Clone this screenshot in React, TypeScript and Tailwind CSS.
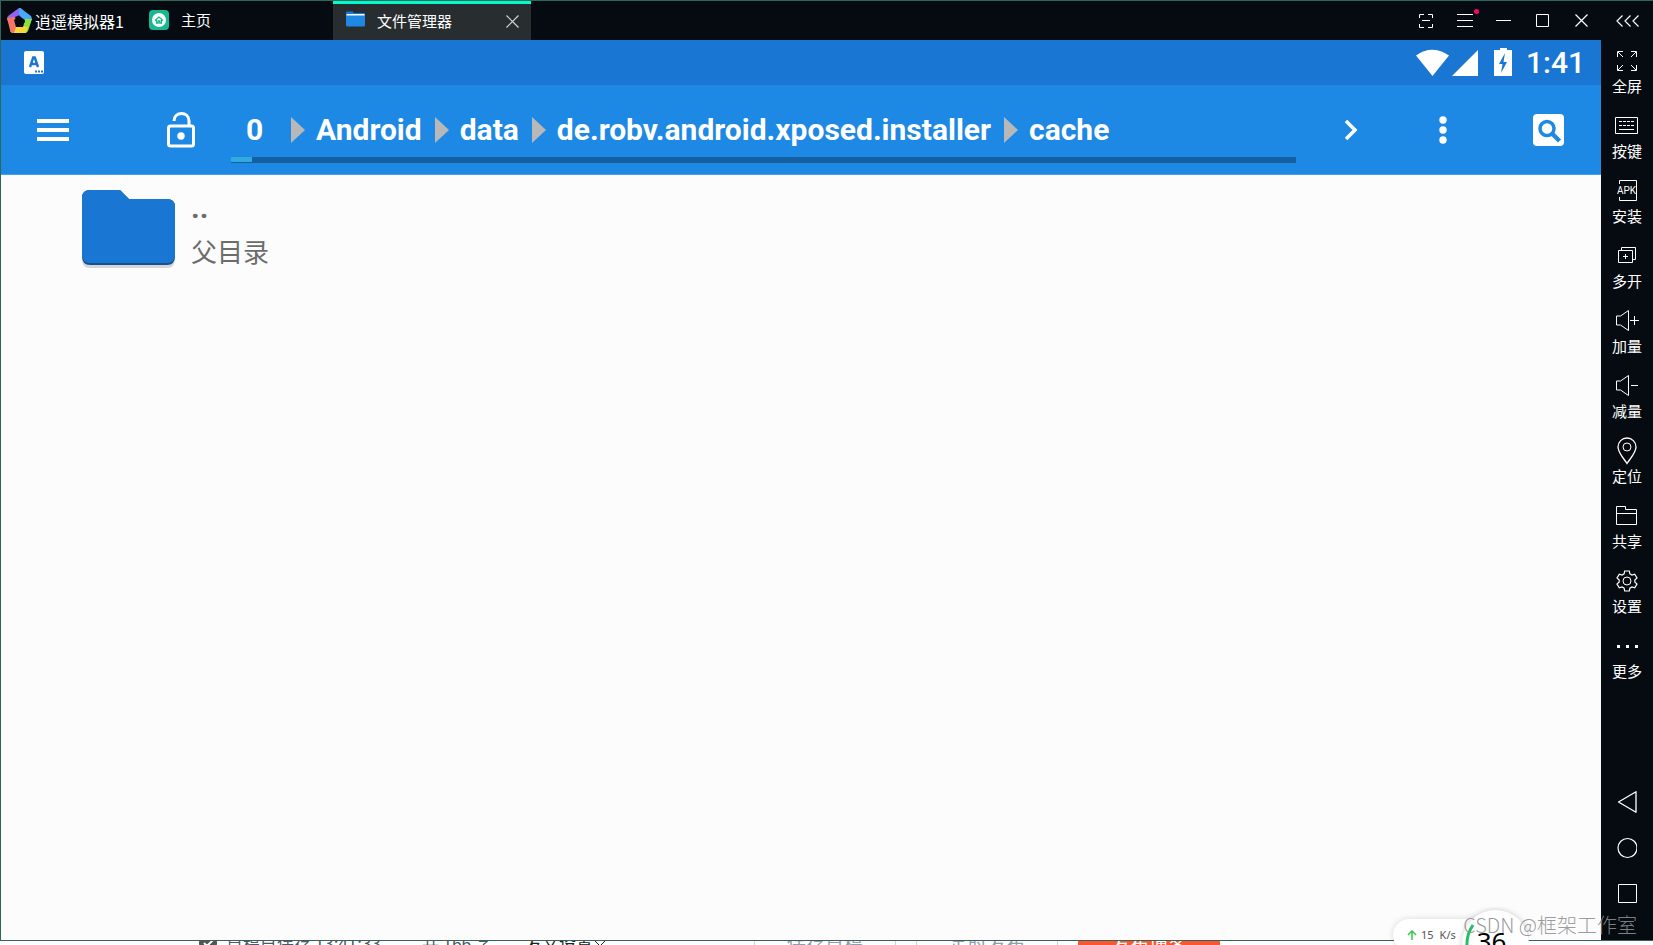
import type { ReactNode } from "react";

function Icon({ w, h, children, className = "" }: { w: number; h: number; children: ReactNode; className?: string }) {
  return (
    <svg width={w} height={h} viewBox={`0 0 ${w} ${h}`} fill="none" stroke="currentColor" className={`shrink-0 ${className}`} aria-hidden="true">
      {children}
    </svg>
  );
}

const windowButtons = [
  {
    label: "截图",
    icon: (
      <Icon w={14} h={14}>
        <path d="M.5 4V.5H5M9 .5h4.500V4M13.500 10v3.500H9M5 13.500H.5V10M3 6.500h8" />
      </Icon>
    ),
  },
  {
    label: "菜单",
    dot: true,
    icon: (
      <Icon w={16} h={14}>
        <path d="M0 .5h16M0 6.500h16M0 12.500h16" />
      </Icon>
    ),
  },
  {
    label: "最小化",
    icon: (
      <Icon w={15} h={14}>
        <path d="M0 6.500h15" />
      </Icon>
    ),
  },
  {
    label: "最大化",
    icon: (
      <Icon w={13} h={14}>
        <path d="M.5 .5h12v12H.5z" />
      </Icon>
    ),
  },
  {
    label: "关闭",
    icon: (
      <Icon w={13} h={14}>
        <path d="M.5 .5l12 12M12.500 .5l-12 12" strokeWidth="1.2" />
      </Icon>
    ),
  },
];

const tools = [
  {
    label: "全屏",
    icon: (
      <Icon w={20} h={20}>
        <path d="M.5 6V.5H6M1 1l5 5M14 .5h5.500V6M19 1l-5 5M.5 14v5.500H6M1 19l5-5M14 19.500h5.500V14M19 19l-5-5" />
      </Icon>
    ),
  },
  {
    label: "按键",
    icon: (
      <Icon w={24} h={18}>
        <path d="M.5 .5h22v16H.5z" />
        <path d="M4 4.500h15M4 8.500h15" strokeDasharray="3 1" />
        <path d="M4 12.500h15" />
      </Icon>
    ),
  },
  {
    label: "安装",
    icon: (
      <Icon w={22} h={22}>
        <path d="M3.500 4V.5h17v20h-17v-3.500" />
        <text x="1" y="14" fontSize="10" fill="currentColor" stroke="none" className="font-['Roboto',sans-serif]">
          APK
        </text>
      </Icon>
    ),
  },
  {
    label: "多开",
    icon: (
      <Icon w={20} h={18}>
        <path d="M1.500 3.500h14v12h-14zM4.500 3V.5h14v12H16M6 9.500h5M8.500 7v5" />
      </Icon>
    ),
  },
  {
    label: "加量",
    icon: (
      <Icon w={24} h={22}>
        <path d="M13.500 .5v20l-8-5.500h-4V6h4zM15 10.500h9M19.500 6v9" />
      </Icon>
    ),
  },
  {
    label: "减量",
    icon: (
      <Icon w={24} h={22}>
        <path d="M13.500 .5v20l-8-5.500h-4V6h4zM16 10.500h7" />
      </Icon>
    ),
  },
  {
    label: "定位",
    icon: (
      <Icon w={20} h={28}>
        <path d="M10 26.500C6 20.500 1 15.500 1 10a9 9 0 0 1 18 0c0 5.500-5 10.500-9 16.500z" strokeWidth="1.3" />
        <circle cx="10" cy="10" r="4" />
      </Icon>
    ),
  },
  {
    label: "共享",
    icon: (
      <Icon w={22} h={20}>
        <path d="M.5 18.500V.5h9v3h11v15zM.5 7.500h20" />
      </Icon>
    ),
  },
  {
    label: "设置",
    icon: (
      <Icon w={22} h={22}>
        <path
          d="M8.700 1h4.600l.6 2.900 2 1.100 2.800-.9 2.300 3.900-2.200 2v2l2.200 2-2.300 3.900-2.800-.9-2 1.100-.6 2.900H8.700l-.6-2.900-2-1.100-2.800.9L1 14l2.200-2v-2L1 8l2.300-3.900 2.800.9 2-1.100z"
          strokeWidth="1.2"
        />
        <circle cx="11" cy="11" r="4" />
      </Icon>
    ),
  },
  {
    label: "更多",
    icon: (
      <Icon w={21} h={3}>
        <path d="M0 1.500h3M9 1.500h3M18 1.500h3" strokeWidth="3" />
      </Icon>
    ),
  },
];

const navButtons = [
  { label: "返回", icon: <path d="M19 .7v20.600L1.500 11z" strokeWidth="1.3" strokeLinejoin="round" /> },
  { label: "主屏幕", icon: <circle cx="10.500" cy="11" r="9.500" strokeWidth="1.2" /> },
  { label: "最近任务", icon: <path d="M1.500 1.500h18v18h-18z" /> },
];

const crumbs = ["Android", "data", "de.robv.android.xposed.installer", "cache"];

function TitleBar() {
  return (
    <header className="flex h-[39px] shrink-0 bg-[#060b11] text-[15px] leading-5 text-white">
      <div className="flex w-[148px] items-center gap-[3px] pl-[6px] text-base leading-5">
        <svg width="25" height="26" viewBox="0 0 25 26" className="shrink-0" aria-hidden="true">
          <path d="M12 0 1 8q-2 3 0 5l7-4 7-3z" fill="#9064f5" />
          <path d="M12 0q2-.5 4 2l8 6q1 2 1 4l-8 1-5-6z" fill="#47aaf8" />
          <path d="M25 11l-4 12q-1 2-4 2l-4-6 5-5-1-3z" fill="#8be13b" />
          <path d="M21 19l-2 6H6q-2 0-3-2l8-6z" fill="#f7d838" />
          <path d="M0 10l8-1 2 7-3 9H6q-2 0-3-3z" fill="#fb7461" />
          <path d="M12 8l6 4-2 7H9l-2-7z" fill="#060b11" />
        </svg>
        <h1 className="whitespace-nowrap">逍遥模拟器1</h1>
      </div>
      <button className="flex w-[184px] items-center gap-3 pb-px">
        <svg width="20" height="20" viewBox="0 0 20 20" aria-hidden="true">
          <rect width="20" height="20" rx="4" fill="#15b892" />
          <circle cx="10" cy="10" r="7" fill="#fff" />
          <path d="M6 10.500 10 7l4 3.500M7.500 10v3h1.700v-2h1.600v2h1.700v-3" fill="none" stroke="#15b892" strokeWidth="1.300" />
        </svg>
        主页
      </button>
      <div className="flex w-[198px] items-center border-t-[3px] border-[#00fccb] bg-[#282d2f] pr-3 pb-[2px] pl-[13px]">
        <button className="flex flex-1 items-center gap-3">
          <svg width="19" height="16" viewBox="0 0 19 16" className="-mt-1" aria-hidden="true">
            <path d="M0 1.500Q0 .5 1 .5h5.500L8 2h10q1 0 1 1v3H0z" fill="#1976d2" />
            <path d="M.5 3h18v3H.5z" fill="#f5fbff" />
            <path d="M0 4.500h19V14q0 1.500-1.500 1.500h-16Q0 15.500 0 14z" fill="#1e88e5" />
          </svg>
          文件管理器
        </button>
        <button aria-label="关闭标签">
          <Icon w={13} h={13} className="text-[#d5d6d6]">
            <path d="M.5 .5l12 12M12.500 .5l-12 12" strokeWidth="1.2" />
          </Icon>
        </button>
      </div>
      <div className="ml-auto flex">
        {windowButtons.map((b) => (
          <button key={b.label} aria-label={b.label} className="relative flex w-[39px] items-center justify-center">
            {b.icon}
            {b.dot && <span className="absolute top-2 right-[5px] size-[5px] rounded-full bg-[#ff0469]" />}
          </button>
        ))}
        <button aria-label="收起侧栏" className="flex w-[52px] items-center justify-center">
          <Icon w={23} h={12}>
            <path d="M6.500 .5 1 6l5.500 5.500M14.500 .5 9 6l5.500 5.500M22.500 .5 17 6l5.500 5.500" strokeWidth="1.2" />
          </Icon>
        </button>
      </div>
    </header>
  );
}

function StatusBar() {
  return (
    <div className="flex h-[45px] shrink-0 items-center bg-[#1976d2] pr-4 pl-[23px] text-white">
      <svg width="20" height="23" viewBox="0 0 20 23" aria-hidden="true">
        <rect width="20" height="23" rx="2" fill="#fff" />
        <path d="M6 16 9.200 6.500h1.600L14 16M7 13h6" fill="none" stroke="#1976d2" strokeWidth="2.400" />
        <path d="M11 20.500h8" stroke="#1976d2" strokeWidth="2" strokeDasharray="2 1" />
      </svg>
      <div className="ml-auto flex items-center">
        <svg width="96" height="28" viewBox="0 0 96 28" fill="#fff" className="mb-[2px]" aria-hidden="true">
          <path d="M0 7.500Q16 -4 33 7.500L16.500 28z" />
          <path d="M62 2v26H36z" />
          <path d="M84 2V0h7v2h5v26H78V2z" />
          <path d="M89 5l-6 11h3.500L85 25l6-11h-3.500z" fill="#1976d2" />
        </svg>
        <span className="ml-[14px] font-['Roboto',sans-serif] text-[30px] leading-9 font-medium">1:41</span>
      </div>
    </div>
  );
}

function Toolbar() {
  return (
    <div className="flex h-[90px] shrink-0 items-center border-b border-[#4a9fea] bg-[#1e88e5] text-white">
      <button aria-label="菜单" className="flex h-full w-[104px] items-center justify-center">
        <Icon w={32} h={22}>
          <path d="M0 2h32M0 11h32M0 20h32" strokeWidth="4" />
        </Icon>
      </button>
      <button aria-label="只读锁" className="ml-[26px] flex h-full w-[100px] items-center justify-center">
        <Icon w={28} h={36}>
          <rect x="1.500" y="14" width="25" height="20" rx="2" strokeWidth="3" />
          <path d="M7 9c0-10 15-10 15 0v5" strokeWidth="3" />
          <circle cx="14" cy="24" r="3.700" fill="currentColor" stroke="none" />
        </Icon>
      </button>
      <nav aria-label="路径" className="flex h-full min-w-0 flex-1 flex-col justify-end pb-[11px]">
        <ol className="flex h-14 items-center pt-[2px] pl-[15px] font-['Roboto',sans-serif] text-[30px] leading-9 font-bold whitespace-nowrap">
          <li className="w-[45px]">
            <a href="#">0</a>
          </li>
          {crumbs.map((c) => (
            <li key={c} className="flex items-center pr-[13px]">
              <svg width="14" height="26" viewBox="0 0 14 26" className="mr-[11px]" aria-hidden="true">
                <path d="M0 0l14 13L0 26z" fill="#b8b8b8" />
              </svg>
              <a href="#">{c}</a>
            </li>
          ))}
        </ol>
        <div role="progressbar" aria-label="存储空间" aria-valuenow={2} className="h-[6px] bg-[#1660a1]">
          <div className="h-[5px] w-[2%] bg-[#31abdf]" />
        </div>
      </nav>
      <button aria-label="前进" className="flex h-full w-[110px] items-center justify-center">
        <Icon w={14} h={22}>
          <path d="M2 2l9 9-9 9" strokeWidth="3.500" />
        </Icon>
      </button>
      <button aria-label="更多选项" className="flex h-full w-[74px] items-center justify-center">
        <svg width="8" height="28" viewBox="0 0 8 28" fill="#fff" aria-hidden="true">
          <circle cx="4" cy="4" r="3.700" />
          <circle cx="4" cy="14" r="3.700" />
          <circle cx="4" cy="24" r="3.700" />
        </svg>
      </button>
      <button aria-label="搜索" className="ml-4 flex h-full w-[105px] items-center justify-center">
        <svg width="31" height="32" viewBox="0 0 31 32" aria-hidden="true">
          <rect width="31" height="32" rx="4" fill="#fff" />
          <circle cx="14" cy="14.500" r="7" fill="none" stroke="#1e88e5" strokeWidth="3.500" />
          <path d="M18.500 19l8 8" stroke="#1e88e5" strokeWidth="4.500" />
        </svg>
      </button>
    </div>
  );
}

function FileList() {
  return (
    <main className="flex-1 bg-[#fcfcfc] pt-3 pl-20">
      <button className="flex text-left text-[#6c6c6c]">
        <svg width="96" height="82" viewBox="0 0 96 82" aria-hidden="true">
          <path d="M1 13q0-8 8-8h30l9 9h38q8 0 8 8v50q0 9-8 9H9q-8 0-8-9z" fill="#000" opacity=".15" />
          <path d="M1 11q0-8 8-8h30l9 9h38q8 0 8 8v49q0 9-8 9H9q-8 0-8-9z" fill="#145192" />
          <path d="M1 11q0-8 8-8h30l9 9h38q8 0 8 8v47q0 9-8 9H9q-8 0-8-9z" fill="#1976d2" />
        </svg>
        <span className="flex flex-col pt-[3px] pl-[14px]">
          <span className="font-['Roboto',sans-serif] text-[30px] leading-9 font-bold">..</span>
          <span className="pt-[5px] text-[26px] leading-10">父目录</span>
        </span>
      </button>
    </main>
  );
}

function SideBar() {
  return (
    <aside className="flex w-[52px] shrink-0 flex-col bg-[#060b11] pt-[5px] pb-[23px] text-[15px] leading-[18px] text-white">
      {tools.map((t) => (
        <button key={t.label} className="flex h-[65px] flex-col items-center">
          <span className="flex h-8 items-center">{t.icon}</span>
          {t.label}
        </button>
      ))}
      <div className="mt-auto flex flex-col">
        {navButtons.map((b) => (
          <button key={b.label} aria-label={b.label} className="flex h-[46px] items-center justify-center">
            <Icon w={20} h={22}>{b.icon}</Icon>
          </button>
        ))}
      </div>
    </aside>
  );
}

// editor footer that peeks out below the emulator window
function EditorFooter() {
  return (
    <footer className="flex h-1 shrink-0 items-center overflow-hidden bg-white pl-[199px] text-[17px] leading-6 whitespace-nowrap text-[#555666]">
      <svg width="18" height="18" viewBox="0 0 18 18" className="mr-[9px] shrink-0" aria-hidden="true">
        <circle cx="9" cy="9" r="9" fill="#555" />
        <path d="M5 9l3 3 6-6" fill="none" stroke="#fff" strokeWidth="2" />
      </svg>
      <span className="w-[196px] shrink-0">草稿已保存 13:41:33</span>
      <span className="w-[103px] shrink-0">共 166 字</span>
      <button className="flex w-[229px] shrink-0 items-center text-[#222226]">
        发文设置
        <Icon w={14} h={8}>
          <path d="M1 1l6 6 6-6" />
        </Icon>
      </button>
      <div className="flex gap-5 text-[19px] text-[#999aaa]">
        <button className="h-10 w-[142px] rounded-full border border-[#ccccd8]">保存草稿</button>
        <button className="h-10 w-[142px] rounded-full border border-[#ccccd8]">定时发布</button>
        <button className="h-10 w-[142px] rounded-full bg-[#fc5531] text-white">发布博客</button>
      </div>
    </footer>
  );
}

function SpeedBall() {
  return (
    <div className="absolute right-[124px] bottom-0 flex h-[38px] w-[140px] items-start overflow-hidden pt-[3px] pl-1">
      <div className="mt-[9px] flex h-8 w-[90px] shrink-0 items-center rounded-l-full bg-white pl-[14px] font-['Noto_Sans',sans-serif] text-[11px] text-[#555] shadow-[0_0_6px_rgba(0,0,0,0.15)]">
        <Icon w={10} h={10} className="mr-1 text-[#35c84a]">
          <path d="M5 10V1M1 5l4-4 4 4" strokeWidth="1.500" />
        </Icon>
        <span className="mr-[6px]">15</span>
        <span>K/s</span>
      </div>
      <div className="-ml-[21px] flex size-[67px] shrink-0 justify-center rounded-full bg-white pr-2 shadow-[0_0_6px_rgba(0,0,0,0.2)]">
        <svg width="67" height="67" viewBox="0 0 67 67" className="absolute left-[73px]" aria-hidden="true">
          <path d="M11 15Q4 25 5 38" fill="none" stroke="#21bf63" strokeWidth="3" />
        </svg>
        <span className="pt-[13px] font-['Noto_Sans',sans-serif] text-[26px] leading-9 text-black">36</span>
      </div>
    </div>
  );
}

export default function App() {
  return (
    <div className="relative flex h-screen flex-col overflow-hidden bg-white font-['Noto_Sans_CJK_SC',sans-serif]">
      <div className="flex min-h-0 flex-1 flex-col border-t border-b border-l border-[#2f665a]">
        <TitleBar />
        <div className="flex min-h-0 flex-1">
          <div className="flex min-w-0 flex-1 flex-col">
            <StatusBar />
            <Toolbar />
            <FileList />
          </div>
          <SideBar />
        </div>
      </div>
      <EditorFooter />
      <SpeedBall />
      <p className="absolute right-4 bottom-[6px] text-[20px] leading-7 font-light text-[#8d8f91]/90">CSDN @框架工作室</p>
    </div>
  );
}
